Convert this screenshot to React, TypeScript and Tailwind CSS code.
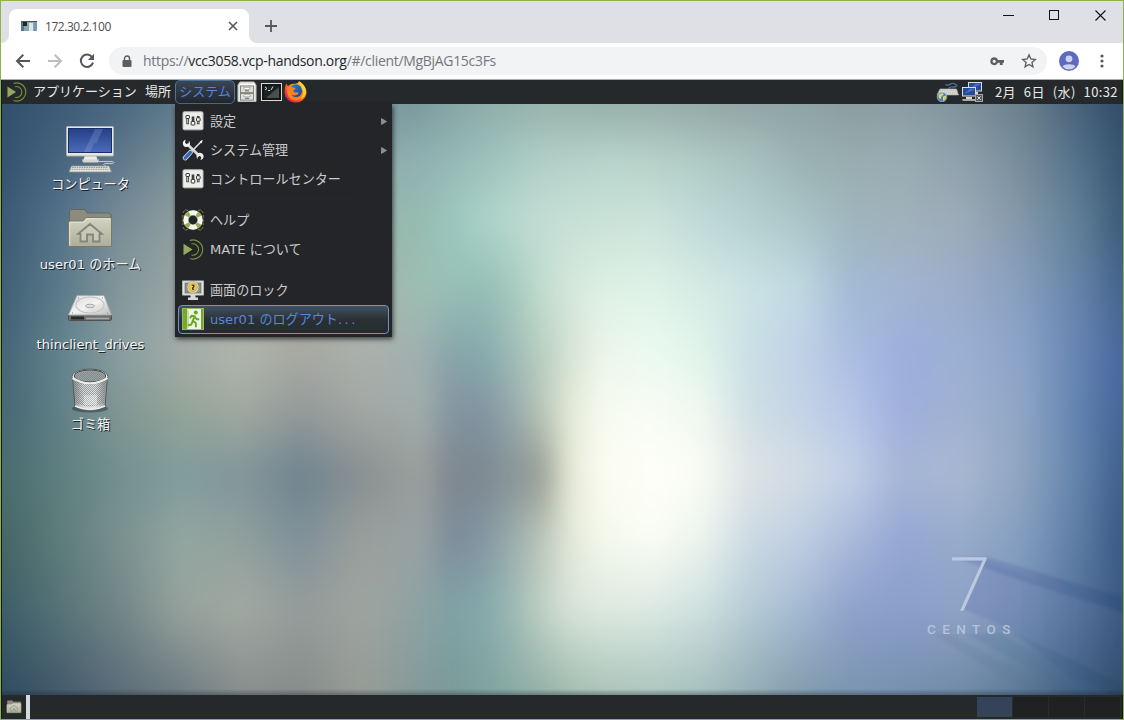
import React from "react";

const JP = "font-['DejaVu_Sans','Noto_Sans_CJK_JP',sans-serif]";

/* Wallpaper colour mesh: one colour per (row, column), blended bilinearly. */
const meshX = [0, 60, 120, 180, 240, 300, 360, 420, 450, 480, 510, 540, 570, 600, 650, 700, 750, 800, 850, 900, 960, 1020, 1080, 1122];
const mesh: { y: number; colors: string }[] = [
  { y: 0, colors: "32506c 3d5b77 4c6880 5d7a8c 6f8a94 768f98 78929a 7c9a9e 85a3a4 8eaca9 93b0ab 96b3ac 96b2ab 95b0a9 97aea9 93a9a6 91a5a5 8ea3a4 8a9ea0 8b9da2 7f929b 6a808c 47607a 324b69" },
  { y: 56, colors: "33526d 486480 5f798c 7a9098 909f9f 95a4a2 8fa9aa 90b2b2 96b9b5 9cc0ba a6c8c1 b0cfc7 b4d2ca b7d4cc b8d3cb b0cac5 a8c2bf 9bb2b2 98adb0 9aabb3 8fa1ac 788d9b 527089 365470" },
  { y: 116, colors: "3b5a73 56738a 798d97 8f9fa0 98a5a2 9ba8a4 9bb2aa 96bcb1 9bc7bd aad2c8 b8d9cf c3ddd5 c6e0d6 c9e2d7 cbe3da c0dad8 b5d0d1 abc5c9 9fb6bc a0b2ba 9dacb9 8398a9 5f7e95 3b5a79" },
  { y: 186, colors: "3f6076 5b7a8a 84989c 9aa5a3 9fa4a0 a1a6a1 a2b3ab 9ebfb2 97bfb6 93bdb4 a3c8bc c0dccf d6e8db def0e4 e0f3e8 d5ebe4 cce3e5 c1d9e2 a2bad4 a2b5d3 9bacc9 879fbf 6482a8 44648c" },
  { y: 246, colors: "446576 64838e 8a9fa2 a3aca9 b1b7ae a9aaa2 acb1ac 9fb0b0 89a6aa 86aaad 9ebbb6 b8cfc1 d5e3d3 ebf5e9 ebfaf1 e0f4ea c8dfe5 bfd1e7 abbde0 9dafdc 9bb0d4 8ba3c7 6583b2 48679c" },
  { y: 306, colors: "456873 618088 819793 94a497 a1a99f 949a9a a3a7a3 a0adac 8595a0 8094a1 94a8ab b8c6b6 e4ead8 f6faee f8fcf5 eff8f0 cfdee4 c4d3e6 b5c6e8 9fafdd a0b1d1 8fa6c6 5f81ae 466598" },
  { y: 371, colors: "4a6c6e 5f7f80 72908f 7e9c9d 82959a 6e838e 878f90 9a9f9c 7e878f 7c8791 879396 989d94 e7ead7 fbfcf0 fefff9 fafcf4 dde3e4 d2dce5 c3d0e6 a6b6d7 a9b9d1 8fa5c0 6182ab 3f5e8c" },
  { y: 436, colors: "456565 5e7d7c 7a918f 94a7a1 91a09d 7f919a 9a9f9c 98a2a5 7d8d9a 8295a2 9aacad bac6b8 e4e9da f3f8ea fafdf4 ecf4ee cbd9e3 c0cee3 a9bada 95a7d4 97abcb 849ec0 5a7ba3 395885" },
  { y: 506, colors: "3d5d68 577478 738787 96a29c a3aaa3 959c9b 9fa49f 8da3a3 80a1a6 84a9ab 9bb8b4 bfd1c5 d8e3d9 dee9e0 dce9e3 cfe0df b5cbd6 a3b9d3 8fa2cb 8a9ecb 8fa3c6 7a93b8 53729b 38567f" },
  { y: 591, colors: "2f4b60 43596c 5b6c79 6d7b80 868d8d 868c8a 979b96 829a98 7a9a98 7ea19e 88a9a2 92b0a7 9fbbae a8c2b7 aac5bd a4bfbc 93acb4 819bac 7a94b0 7690ae 6f89a5 5b7894 3b5a7b 2c4862" },
];

function Wallpaper() {
  return (
    <svg className="absolute inset-0" width="1121" height="591" viewBox="1 0 1121 591">
      <defs>
        {mesh.map((row, i) => (
          <React.Fragment key={row.y}>
            <linearGradient id={`row${i}`} gradientUnits="userSpaceOnUse" x1="0" y1="0" x2="1122" y2="0">
              {row.colors.split(" ").map((c, k) => (
                <stop key={k} offset={meshX[k] / 1122} stopColor={`#${c}`} />
              ))}
            </linearGradient>
            {i > 0 && (
              <>
                <linearGradient id={`fade${i}`} gradientUnits="userSpaceOnUse" x1="0" x2="0" y1={mesh[i - 1].y} y2={row.y}>
                  <stop offset="0" stopColor="#fff" stopOpacity="0" />
                  <stop offset="1" stopColor="#fff" />
                </linearGradient>
                <mask id={`mask${i}`} maskUnits="userSpaceOnUse" x="-50" y="-50" width="1222" height="691" style={{ maskType: "alpha" }}>
                  <rect x="-50" y="-50" width="1222" height="691" fill={`url(#fade${i})`} />
                </mask>
              </>
            )}
          </React.Fragment>
        ))}
        <linearGradient id="beam" x1="0" x2="1"><stop offset="0" stopColor="#5465a8" stopOpacity=".25" /><stop offset="1" stopColor="#243f74" stopOpacity=".28" /></linearGradient>
        <linearGradient id="haze" x1="0" x2="1"><stop offset="0" stopColor="#6071b0" stopOpacity=".3" /><stop offset="1" stopColor="#5a6f9a" stopOpacity=".1" /></linearGradient>
        <linearGradient id="bottomShade" x1="0" x2="0" y1="0" y2="1"><stop offset="0" stopColor="#17222c" stopOpacity="0" /><stop offset="1" stopColor="#17222c" stopOpacity=".35" /></linearGradient>
        <filter id="soft" x="-20%" y="-20%" width="140%" height="140%"><feGaussianBlur stdDeviation="1.5" /></filter>
        <filter id="meshBlur" filterUnits="userSpaceOnUse" x="-50" y="-50" width="1222" height="691" colorInterpolationFilters="sRGB"><feGaussianBlur stdDeviation="9 14" /></filter>
      </defs>
      <g filter="url(#meshBlur)">
        {mesh.map((row, i) => (
          <rect key={row.y} x="-50" y="-50" width="1222" height="691" fill={`url(#row${i})`} mask={i > 0 ? `url(#mask${i})` : undefined} />
        ))}
      </g>
      <g filter="url(#soft)">
        <path d="M954 454 L986 453 L1122 493 L1122 509 L1030 480Z" fill="url(#beam)" />
        <path d="M984 456 L1122 509 L1122 580 L1010 525 L962 505Z" fill="url(#haze)" />
        <path d="M1008 525 L1122 580 L1122 590 L1090 590Z" fill="#34527f" opacity=".15" />
        <path d="M932 530 L950 530 L1060 591 L1030 591Z" fill="#5b7397" opacity=".18" />
        <path d="M965 530 L1000 530 L1110 591 L1080 591Z" fill="#4c678f" opacity=".18" />
      </g>
      <rect y="585" width="1122" height="6" fill="url(#bottomShade)" />
    </svg>
  );
}

function MateLogo({ size = 20 }: { size?: number }) {
  return (
    <svg width={size} height={size} viewBox="0 0 22 22" fill="none">
      <path d="M.5 5 L10 11 L.5 17Z" fill="#93a95e" />
      <path d="M7.2 1.6 A10 10 0 1 1 7.2 20.4" stroke="#7b9140" strokeWidth="1.2" />
      <path d="M8.8 5.2 A6 6 0 1 1 8.8 16.8" stroke="#7b9140" strokeWidth="1.2" />
    </svg>
  );
}

function FileCabinet() {
  return (
    <svg width="20" height="22" viewBox="0 0 20 22">
      <path d="M3 1 H17 L19 4 V20.5 H1 V4Z" fill="#e9e9e6" stroke="#c2c2be" />
      <path d="M3 3.5 H17" stroke="#fff" />
      {[5, 12.5].map((y) => (
        <g key={y}>
          <rect x="3.5" y={y} width="13" height="6.6" fill="#dededa" stroke="#85857f" />
          <rect x="7" y={y + 1.3} width="6" height="2" fill="#fff" stroke="#91918c" strokeWidth=".6" />
          <path d={`M8 ${y + 4.8} H12`} stroke="#666" />
        </g>
      ))}
    </svg>
  );
}

function TerminalIcon() {
  return (
    <svg width="21" height="18" viewBox="0 0 21 18">
      <rect x=".5" y=".5" width="20" height="17" fill="#191c1b" stroke="#dcdcd8" />
      <rect x="2" y="2" width="17" height="14" fill="#1b2221" stroke="#0d0f0f" />
      <path d="M5 15 L18 4 V15Z" fill="#565d5a" opacity=".8" />
      <path d="M4 4 L6 5.5 L4 7 M7 7.5 H9 M12 3.5 L10 7" stroke="#e3e5e0" strokeWidth=".9" fill="none" />
    </svg>
  );
}

function Firefox() {
  return (
    <svg width="23" height="23" viewBox="0 0 23 23">
      <defs>
        <linearGradient id="fx" x1="1" y1="0" x2=".2" y2="1"><stop offset="0" stopColor="#ffe226" /><stop offset=".4" stopColor="#ff9a1b" /><stop offset=".75" stopColor="#f2412f" /><stop offset="1" stopColor="#d51b62" /></linearGradient>
        <linearGradient id="fxb" x1="0" y1="0" x2="1" y2="1"><stop offset="0" stopColor="#1b8ee8" /><stop offset="1" stopColor="#203a8d" /></linearGradient>
      </defs>
      <path d="M15 .3 C18 2 22.5 6 22.5 12 A11 10.7 0 0 1 .6 12 C.6 8.5 1 5.5 2.4 2.5 L4 5.5 C5 4 6 3.6 7.6 3 C11 2 13 4 15 .3Z" fill="url(#fx)" />
      <circle cx="11.8" cy="9.7" r="6.4" fill="url(#fxb)" />
      <path d="M3.5 6.5 C5 4.8 7.5 5 8.8 6.5 L11.5 7 C11.5 8.6 9.6 8.8 9 10 C10.5 12.3 13 11.5 15 11.4 C13.7 14.5 10 15 7.5 13.4 C9 16.5 13 17.5 16.5 14.7 C18.4 13 18.3 10 17.5 7 C21 11 18.5 19.5 11.5 19.6 C5 19.5 2 13 3.5 6.5Z" fill="#ff811d" />
      <path d="M15 .3 C14.8 4 18 5.8 18.8 9.4 C19.6 13 18.4 16 16.2 18.4 C20.8 16.5 22.7 12 21.7 8.3 C20.7 4.5 18 2 15 .3Z" fill="#ffd32b" />
    </svg>
  );
}

function MiniMonitor({ x, y }: { x: number; y: number }) {
  return (
    <g>
      <rect x={x + 0.5} y={y + 0.5} width="13" height="8.5" fill="#264a9a" stroke="#dedfdb" />
      <path d={`M${x + 2} ${y + 7} L${x + 8} ${y + 1.5} H${x + 12} V${y + 3}Z`} fill="#4a6fb9" />
      <path d={`M${x + 4} ${y + 11} H${x + 10}`} stroke="#d5d6d0" strokeWidth="2" />
      <path d={`M${x + 0.5} ${y + 13} H${x + 13}`} stroke="#b8b9b2" strokeWidth="1.8" />
    </g>
  );
}

function NetworkIcon() {
  return (
    <svg width="22" height="20" viewBox="0 0 22 20">
      <MiniMonitor x={7} y={0} />
      <MiniMonitor x={1} y={5} />
      <rect x="14.5" y="12.5" width="7" height="7" fill="#55585a" stroke="#a7a9a9" />
      <path d="M16.2 14.2 L19.8 17.8 M19.8 14.2 L16.2 17.8" stroke="#ddd" strokeWidth="1" />
    </svg>
  );
}

function KeyboardIcon() {
  return (
    <svg width="23" height="20" viewBox="0 0 23 20">
      <path d="M9.5 2.5 C12 5 16 0 18 1.5 S22 3 20 4.5 S12 3.5 13 7" stroke="#4e73a9" strokeWidth="1.2" fill="none" />
      <path d="M4 7 H20.5 L22.5 13 H1Z" fill="#e3e3df" stroke="#a2a29c" strokeWidth=".7" />
      <path d="M4 8.7 H20 M3.5 10.3 H20.7 M3 12 H21" stroke="#a8a8a3" strokeWidth=".8" strokeDasharray="1.4 .7" />
      <circle cx="6" cy="15" r="4.8" fill="#4e80bf" stroke="#b9cde3" strokeWidth=".6" />
      <path d="M2.5 13.5 C4 10.5 7 11 7.5 12 S5 14 5 16 S3 16.5 2.5 15Z M7 14.5 L10 13.4 C10.5 16 9 18.4 7 18.8Z" fill="#d8d666" />
    </svg>
  );
}

function SlidersIcon() {
  return (
    <svg width="22" height="20" viewBox="0 0 22 20">
      <rect x="1" y=".8" width="20" height="18" rx="1.3" fill="#ececea" stroke="#bfbfbb" />
      <path d="M5.6 6 V13.2 M11 5.5 V10 M16.2 5 V13.2" stroke="#3b3e3c" strokeWidth="2.6" />
      <path d="M5.6 8 V12.4 M16.2 9 V12.4" stroke="#e4e4e2" strokeWidth=".8" />
      <rect x="4" y="4.5" width="3.4" height="3" rx=".5" fill="#fff" stroke="#2d302e" />
      <rect x="9.2" y="10.4" width="3.6" height="3.6" rx=".5" fill="#fff" stroke="#2d302e" />
      <rect x="14.5" y="6.8" width="3.6" height="3.4" rx=".8" fill="#fff" stroke="#2d302e" />
    </svg>
  );
}

function ToolsIcon() {
  return (
    <svg width="22" height="22" viewBox="0 0 22 22" fill="none">
      <path d="M5 5 L17.5 17" stroke="#d9d9d7" strokeWidth="2.8" />
      <path d="M3.6 .8 C1 1.5 .2 4.5 1.4 6.4 C2.8 8.4 5.4 8.4 7 7.2 C8.5 5.6 8.2 3.2 6.9 1.7 L6.7 4.6 L4.6 5.2 L3 3.6Z" fill="#f3f3f1" />
      <path d="M18.4 21 C21 20.5 22.2 18 21.3 16 C20.2 13.7 17.6 13.2 15.7 14.5 C14 16 14.2 18.6 15.5 20.2 L15.8 17.5 L17.8 16.8 L19.3 18.4Z" fill="#ededeb" />
      <path d="M19.8 2 L10 12" stroke="#dfdfdf" strokeWidth="1.6" />
      <path d="M17.8 2.4 L20.8 .8 L19.6 4.4Z" fill="#fff" />
      <path d="M8.4 13.4 L3.2 19" stroke="#c5d4ec" strokeWidth="4.8" strokeLinecap="round" />
      <path d="M8.4 13.4 L3.2 19" stroke="#3d66aa" strokeWidth="3.2" strokeLinecap="round" />
    </svg>
  );
}

function HelpIcon() {
  return (
    <svg width="22" height="22" viewBox="0 0 22 22" fill="none">
      <path d="M.8 4 L3 .8 L6 1.5 M21.2 4 L19 .8 L16 1.5 M.8 18 L3 21.2 L6 20.5 M21.2 18 L19 21.2 L16 20.5 M.8 6 V16 M21.2 6 V16" stroke="#8d7750" strokeWidth="1" strokeDasharray="3 1" />
      <circle cx="11" cy="11" r="7.2" stroke="#4f6428" strokeWidth="6" />
      <circle cx="11" cy="11" r="7.2" stroke="#f6f6f2" strokeWidth="5" />
      <circle cx="11" cy="11" r="7.2" stroke="#8fae5c" strokeWidth="4.8" strokeDasharray="3.8 7.51" strokeDashoffset="-3.75" />
    </svg>
  );
}

function LockScreenIcon() {
  return (
    <svg width="22" height="21" viewBox="0 0 22 21">
      <rect x=".7" y="1" width="20.6" height="14" fill="#e9e9e4" stroke="#c7c7c1" />
      <rect x="3" y="3" width="16" height="10" fill="#8e9289" stroke="#666a62" strokeWidth=".7" />
      <path d="M8.5 15 H13.5 V17.5 H16 V20 H6 V17.5 H8.5Z" fill="#d9d9d4" />
      <circle cx="11" cy="7.3" r="5.8" fill="#fff8d8" stroke="#8d8b7a" strokeWidth=".6" />
      <circle cx="11" cy="7.3" r="4.4" fill="#ecca4c" stroke="#9e8430" strokeWidth=".6" />
      <path d="M9.8 5.2 H11.8 V6.8 L10.6 8 V9.2 H12.2" stroke="#27220d" strokeWidth="1.1" fill="none" />
    </svg>
  );
}

function LogoutIcon() {
  return (
    <svg width="22" height="22" viewBox="0 0 22 22" fill="none">
      <rect x=".5" y=".5" width="21" height="21" fill="#76a82b" stroke="#9bb56c" />
      <path d="M5 1 H19 V21 H5Z" fill="#eef3e7" />
      <path d="M5 1 L7 3 V19 L5 21Z" fill="#c4dba2" />
      <circle cx="13.8" cy="4.4" r="2" fill="#69a51e" />
      <path d="M8 10.3 L9.5 7.8 L12.6 8.2 L10.8 12.8 L13.8 15 L14 19.3 M10.8 13 L9 16.8 L5.8 17.2 M12.8 8.8 L14.6 11.2 L17.2 11.3" stroke="#69a51e" strokeWidth="1.9" strokeLinejoin="round" />
    </svg>
  );
}

function ComputerIcon() {
  return (
    <svg width="50" height="48" viewBox="0 0 50 48">
      <defs><linearGradient id="scr" x1="0" y1="0" x2="0" y2="1"><stop offset="0" stopColor="#263f86" /><stop offset="1" stopColor="#4b6cba" /></linearGradient></defs>
      <path d="M33 36.5 H46 C50 36.5 50 38.5 46 38.5 H41 C38 38.5 38 40 41 41" stroke="#c5cbcb" fill="none" strokeWidth="1" />
      <path d="M20 30 H31 L32.5 35 H18.5Z" fill="#ececea" />
      <path d="M17 34.5 H34 L33 37.5 H18Z" fill="#d4d6d4" />
      <rect x="1.5" y="1.5" width="47" height="29.5" rx="1" fill="#e6e6e2" stroke="#aeb0ad" />
      <rect x="3.5" y="3.5" width="43" height="24" fill="url(#scr)" stroke="#192d68" />
      <path d="M19 27 L30 4 H36 L25 27Z M28 15 L34 4 H38 L31 19Z" fill="#9baee0" opacity=".25" />
      <path d="M6.5 41 H44 L46.5 47 H4Z" fill="#e3e3df" stroke="#8f918d" strokeWidth=".8" />
      <path d="M7 42.5 H43 M6.5 44.3 H43.5" stroke="#8d8f8a" strokeWidth=".9" strokeDasharray="1.6 .8" />
    </svg>
  );
}

function HomeFolder({ size = 48 }: { size?: number }) {
  return (
    <svg width={size} height={size} viewBox="0 0 48 48">
      <defs><linearGradient id={`fold${size}`} x1="0" y1="0" x2="0" y2="1"><stop offset="0" stopColor="#d3d3bf" /><stop offset="1" stopColor="#adad99" /></linearGradient></defs>
      <path d="M3.5 41 V6 L5 4.5 H19 L21 8 H43 Q45 8 45 10 V41Z" fill="#8b8c7e" stroke="#66685f" />
      <path d="M2.5 41.5 V18 Q2.5 16 4 16 H17 L20 12.5 H44 Q45.5 12.5 45.5 14 V41.5Z" fill={`url(#fold${size})`} stroke="#777a6d" />
      <path d="M3.8 40.5 V17.3 H17.7 L20.6 13.8 H44.2" fill="none" stroke="#e3e3d5" strokeWidth="1" />
      <path d="M12 29 L24 19 L36 29 L33.5 29.2 V36.5 H27 V29.5 H21 V36.5 H14.5 V29.2Z" fill="#c9c9b8" stroke="#82857a" strokeWidth="1.8" />
    </svg>
  );
}

function DriveIcon() {
  return (
    <svg width="48" height="48" viewBox="0 0 48 48">
      <defs><linearGradient id="hd" x1="0" y1="0" x2="1" y2="1"><stop offset="0" stopColor="#dadada" /><stop offset=".5" stopColor="#f2f2f2" /><stop offset="1" stopColor="#bdbdbd" /></linearGradient></defs>
      <path d="M2.5 30 H45.5 V34 Q45.5 35.5 44 35.5 H4 Q2.5 35.5 2.5 34Z" fill="#6c6d6d" stroke="#4f5152" />
      <path d="M5 33 H18" stroke="#292b2b" strokeWidth="3" /><path d="M20 33.5 H43" stroke="#a5a5a5" strokeWidth="1.6" />
      <path d="M11 10.5 H38 L45.5 30 H2.5Z" fill="url(#hd)" stroke="#aaacac" />
      <ellipse cx="24" cy="20" rx="14" ry="8" fill="none" stroke="#c0c2c2" strokeWidth="1.1" />
      <ellipse cx="24" cy="21" rx="4.5" ry="1.8" fill="#dedede" stroke="#a8aaaa" />
      <path d="M12 13 H13 M36 13 H37 M6 28 H7 M41 28 H42" stroke="#888" />
    </svg>
  );
}

function TrashIcon() {
  return (
    <svg className="mt-[2px] -mb-[2px]" width="48" height="48" viewBox="0 0 48 48">
      <defs>
        <pattern id="holes" width="2" height="2" patternUnits="userSpaceOnUse"><rect width="1" height="1" fill="#6e7476" /><rect x="1" y="1" width="1" height="1" fill="#6e7476" /></pattern>
        <linearGradient id="bin" x1="0" x2="1"><stop offset="0" stopColor="#838786" /><stop offset=".3" stopColor="#d8dada" /><stop offset=".65" stopColor="#e5e6e6" /><stop offset="1" stopColor="#888b8a" /></linearGradient>
      </defs>
      <ellipse cx="24" cy="41.5" rx="18" ry="4" fill="#273238" opacity=".5" />
      <path d="M6.5 10 L9 40 Q24 47 39 40 L41.5 10Z" fill="url(#bin)" stroke="#555958" />
      <path d="M8 13 L10 36 Q24 43 38 36 L40 13Z" fill="url(#holes)" opacity=".65" />
      <path d="M18 28 H31 V38 H18Z" fill="#fff" opacity=".3" />
      <ellipse cx="24" cy="9.5" rx="18" ry="7.5" fill="#f2f2f2" stroke="#595d5d" />
      <ellipse cx="24" cy="9" rx="15.8" ry="6" fill="#9aa5a5" stroke="#3d4242" />
      <ellipse cx="24" cy="9.5" rx="14.5" ry="5" fill="url(#holes)" opacity=".6" />
      <path d="M6.5 11 Q24 22 41.5 11" fill="none" stroke="#ededed" strokeWidth="2.2" />
      <path d="M9 39 Q24 46 39 39" fill="none" stroke="#eee" strokeWidth="1.6" />
    </svg>
  );
}

function Tab() {
  return (
    <div className="relative ml-2 mt-2 flex h-[34px] w-[240px] items-center rounded-t-lg bg-white pl-3">
      <svg className="absolute -left-2 bottom-0" width="8" height="8"><path d="M8 0 V8 H0 A8 8 0 0 0 8 0Z" fill="#fff" /></svg>
      <svg className="absolute -right-2 bottom-0" width="8" height="8"><path d="M0 0 V8 H8 A8 8 0 0 1 0 0Z" fill="#fff" /></svg>
      <svg width="16" height="10" viewBox="0 0 16 10">
        <rect width="16" height="10" fill="#8aa9af" /><rect width="3" height="10" fill="#56788b" /><rect x="2" y="1" width="4" height="4" fill="#222629" /><rect x="8" y="2" width="4" height="8" fill="#dbe9e5" /><rect x="13" width="3" height="10" fill="#7796bd" /><rect width="16" height="1" fill="#4a5558" />
      </svg>
      <span className="ml-2 mt-px text-[12px] leading-4 tracking-[-0.45px] text-[#4b4d52]">172.30.2.100</span>
      <svg className="absolute left-[219px] top-[12px]" width="10" height="10" stroke="#55585c" strokeWidth="1.6"><path d="M1 1 L9 9 M9 1 L1 9" /></svg>
    </div>
  );
}

function BrowserChrome() {
  return (
    <header className="flex h-[79px] flex-col border-b border-[#a9abad] bg-white font-['Open_Sans',sans-serif]">
      <div className="flex h-[42px] bg-[#dee0e6]">
        <Tab />
        <svg className="ml-[15px] mt-[18px]" width="14" height="14" stroke="#55585c" strokeWidth="1.8"><path d="M7 1 V13 M1 7 H13" /></svg>
        <div className="ml-auto mr-[17px] mt-[9px] flex gap-[35px]">
          <svg width="11" height="11" stroke="#111"><path d="M0 5.5 H11" /></svg>
          <svg width="11" height="11" stroke="#111" fill="none"><rect x=".5" y=".5" width="9" height="9" /></svg>
          <svg width="11" height="11" stroke="#111" strokeWidth="1.1"><path d="M.5 .5 L10.5 10.5 M10.5 .5 L.5 10.5" /></svg>
        </div>
      </div>
      <div className="flex flex-1 items-center pl-[14px]">
        <svg width="16" height="16" viewBox="0 0 16 16" fill="none" stroke="#55585c" strokeWidth="2"><path d="M15 8 H2.5 M8.3 1.7 L2 8 L8.3 14.3" /></svg>
        <svg className="ml-4" width="16" height="16" viewBox="0 0 16 16" fill="none" stroke="#bbbdc0" strokeWidth="2"><path d="M1 8 H13.5 M7.7 1.7 L14 8 L7.7 14.3" /></svg>
        <svg className="ml-4" width="16" height="16" viewBox="0 0 16 16" fill="none"><path d="M13.2 4.2 A6.2 6.2 0 1 0 14 9.6" stroke="#55585c" strokeWidth="2" /><path d="M15 .8 V7 H8.8Z" fill="#55585c" /></svg>
        <div className="ml-[14px] flex h-7 w-[938px] items-center rounded-full bg-[#f1f3f4] pl-[13px] pr-[10px]">
          <svg width="10" height="13" viewBox="0 0 10 13"><path d="M2.5 6 V3.5 A2.5 2.5 0 0 1 7.5 3.5 V6" stroke="#5b5e62" strokeWidth="1.4" fill="none" /><rect x=".5" y="5" width="9" height="7" rx="1" fill="#5b5e62" /></svg>
          <span className="ml-[11px] whitespace-nowrap text-[14px] leading-5 tracking-[-0.31px] text-[#73777c]">https://<span className="text-[#26282b]">vcc3058.vcp-handson.org</span>/#/client/MgBjAG15c3Fs</span>
          <svg className="ml-auto" width="14" height="9" viewBox="0 0 14 9"><path fillRule="evenodd" d="M4.2 .2 A4 4 0 0 1 8 3 H14 V5.8 H12.7 V8 H9.8 V5.8 H8 A4 4 0 1 1 4.2 .2Z M4.2 2.7 A1.6 1.6 0 1 0 4.2 6 A1.6 1.6 0 1 0 4.2 2.7Z" fill="#5b5e62" /></svg>
          <svg className="ml-[17px]" width="16" height="16" viewBox="0 0 24 24" fill="none" stroke="#5b5e62" strokeWidth="2"><path d="M12 2.8 L14.7 9 L21.5 9.7 L16.4 14.2 L17.9 20.8 L12 17.3 L6.1 20.8 L7.6 14.2 L2.5 9.7 L9.3 9Z" /></svg>
        </div>
        <svg className="ml-3" width="20" height="20" viewBox="0 0 20 20"><circle cx="10" cy="10" r="10" fill="#5c6bc0" /><circle cx="10" cy="7.8" r="3.4" fill="#ced2ec" /><path d="M3.5 15.5 C5 12.5 15 12.5 16.5 15.5 A8.5 8.5 0 0 1 3.5 15.5Z" fill="#ced2ec" /></svg>
        <svg className="ml-[21px]" width="4" height="14" fill="#55585c"><circle cx="2" cy="2" r="1.6" /><circle cx="2" cy="7" r="1.6" /><circle cx="2" cy="12" r="1.6" /></svg>
      </div>
    </header>
  );
}

function MenuItem({ icon, label, submenu, active }: { icon: React.ReactNode; label: React.ReactNode; submenu?: boolean; active?: boolean }) {
  return (
    <div className={active
      ? "flex h-[29px] items-center rounded-[4px] border border-[#6d95c3] bg-gradient-to-b from-[#44525f] via-[#2b3035] to-[#262b2f] pl-[3px] text-[#5587dc]"
      : "flex h-[29px] items-center pl-1 pr-[2px] text-[#cacac9]"}>
      <span className="-mt-px flex w-[22px] justify-center">{icon}</span>
      <span className="ml-[6px] whitespace-nowrap text-[13.1px] leading-[18px]">{label}</span>
      {submenu && <svg className="ml-auto" width="6" height="7"><path d="M.5 .5 L5.5 3.5 L.5 6.5Z" fill="#8b8d8e" stroke="#a8a8a8" strokeWidth=".6" /></svg>}
    </div>
  );
}

function SystemMenu() {
  return (
    <div className="absolute left-[173px] top-0 flex h-[233px] w-[217px] flex-col bg-[#232529] px-[3px] pt-[3px] shadow-[1px_2px_5px_rgba(0,0,0,0.65)]">
      <MenuItem icon={<SlidersIcon />} label="設定" submenu />
      <MenuItem icon={<ToolsIcon />} label="システム管理" submenu />
      <MenuItem icon={<SlidersIcon />} label="コントロールセンター" />
      <div className="mx-9 mb-[6px] mt-[5px] h-px bg-[#25272b]" />
      <MenuItem icon={<HelpIcon />} label="ヘルプ" />
      <MenuItem icon={<MateLogo size={21} />} label="MATE について" />
      <div className="mx-9 mb-[5px] mt-[6px] h-px bg-[#25272b]" />
      <MenuItem icon={<LockScreenIcon />} label="画面のロック" />
      <MenuItem icon={<LogoutIcon />} label={<>user01 のログアウト<span className="tracking-[2.5px]">...</span></>} active />
    </div>
  );
}

function DesktopIcon({ icon, label }: { icon: React.ReactNode; label: string }) {
  return (
    <div className="flex h-20 w-[140px] flex-col items-center">
      {icon}
      <span className="mt-[3px] whitespace-nowrap pl-px text-[13.1px] leading-[18px] text-[#f4f4f4] [text-shadow:1px_1px_0_#1c2226]">{label}</span>
    </div>
  );
}

export default function App() {
  return (
    <div className={`flex h-[720px] w-[1124px] flex-col overflow-hidden border border-[#8fb34b] bg-white ${JP}`}>
      <BrowserChrome />
      <div className="flex flex-1 flex-col border-x border-[#111618] bg-[#26292b]">
        <div className="flex h-6 items-center text-[13px] text-[#e8e8e8]">
          <span className="ml-[5px]"><MateLogo size={20} /></span>
          <span className="ml-[6px] w-[104px] whitespace-nowrap leading-[18px]">アプリケーション</span>
          <span className="ml-2 w-[26px] whitespace-nowrap leading-[18px]">場所</span>
          <span className="ml-1 flex h-6 w-[60px] items-center justify-center whitespace-nowrap rounded-[5px] border border-[#50739b] bg-gradient-to-b from-[#3a4654] to-[#22282f] text-[#5587dc]">システム</span>
          <span className="ml-[2px]"><FileCabinet /></span>
          <span className="ml-1"><TerminalIcon /></span>
          <span className="ml-[2px]"><Firefox /></span>
          <span className="ml-auto"><KeyboardIcon /></span>
          <span className="ml-[2px]"><NetworkIcon /></span>
          <span className="ml-3 mr-1 w-[123px] whitespace-nowrap font-['Noto_Sans_CJK_JP',sans-serif] text-[13px] leading-[18px] tracking-[0.38px] [word-spacing:4.6px]">2月 6日 (水) 10:32</span>
        </div>
        <main className="relative h-[591px]">
          <Wallpaper />
          <div className="absolute left-[948px] top-[449px] h-[64px] font-['Roboto',sans-serif] text-[73px] font-thin leading-[64px] text-[#bccae0] [-webkit-text-stroke:1.3px_#bccae0]">7</div>
          <div className="absolute left-[925px] top-[516px] font-['Roboto',sans-serif] text-[13.5px] font-medium leading-[18px] tracking-[6.4px] text-[#b2c3da]">CENTOS</div>
          <div className="relative flex w-[176px] flex-col items-center pt-[21px]">
            <DesktopIcon icon={<ComputerIcon />} label="コンピュータ" />
            <DesktopIcon icon={<HomeFolder />} label="user01 のホーム" />
            <DesktopIcon icon={<DriveIcon />} label="thinclient_drives" />
            <DesktopIcon icon={<TrashIcon />} label="ゴミ箱" />
          </div>
          <SystemMenu />
        </main>
        <div className="flex h-6 items-center bg-[#26292b]">
          <span className="ml-1"><HomeFolder size={16} /></span>
          <span className="ml-1 h-6 w-1 bg-[#d4d8df]" />
          <div className="ml-auto mr-[2px] flex gap-px bg-[#292c2e]">
            <div className="h-5 w-[35px] bg-[#34425a]" />
            <div className="h-5 w-[35px] bg-[#1f2123]" />
            <div className="h-5 w-[35px] bg-[#1f2123]" />
            <div className="h-5 w-[35px] bg-[#1f2123]" />
          </div>
        </div>
      </div>
    </div>
  );
}
